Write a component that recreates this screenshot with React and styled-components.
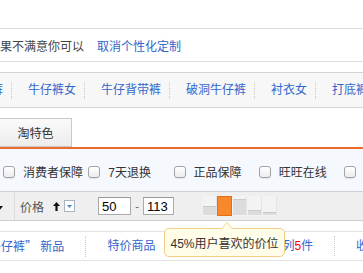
import React from 'react';
import styled, { createGlobalStyle } from 'styled-components';

const GlobalStyle = createGlobalStyle`
  html, body {
    margin: 0;
    padding: 0;
    background: #fff;
    overflow: hidden;
  }
  body {
    font-family: "Liberation Sans", "Noto Sans CJK SC", sans-serif;
    font-size: 12px;
    color: #333;
  }
`;

const Page = styled.div`
  width: 363px;
  height: 273px;
  overflow: hidden;
  position: relative;
`;

const TopSpace = styled.div`
  height: 28px;
  border-bottom: 1px solid #ddd;
`;

const Notice = styled.div`
  height: 32px;
  display: flex;
  align-items: center;
  border-bottom: 1px solid #ddd;
  color: #444;
  white-space: nowrap;
`;

const Link = styled.a`
  color: #3366cc;
  text-decoration: none;
  margin-left: ${p => p.$gap || 0}px;
`;

const Nav = styled.div`
  margin-top: 10px;
  height: 34px;
  background: #f7f7f7;
  border-top: 1px solid #d4d4d4;
  border-bottom: 1px solid #d4d4d4;
  display: flex;
  align-items: center;
  white-space: nowrap;
`;

const NavList = styled.div`
  display: flex;
  align-items: center;
  margin-left: -49px;
`;

const NavItem = styled.a`
  color: #3366cc;
  text-decoration: none;
  line-height: 17px;
  padding: 0 8px 0 16px;
  border-right: 1px dotted #c8c8c8;
  flex-shrink: 0;
`;

const TabRow = styled.div`
  margin-top: 10px;
  display: flex;
  border-bottom: 2px solid #ec6a2c;
`;

const TabButton = styled.div`
  margin-left: -1px;
  width: 71px;
  height: 27px;
  border: 1px solid #c9c9c9;
  background: linear-gradient(#fbfbfb, #ececec);
  display: flex;
  align-items: center;
  justify-content: center;
  color: #333;
`;

const Filters = styled.div`
  height: 43px;
  background: #f5f8fd;
  border-bottom: 1px solid #cfcfcf;
  display: flex;
  align-items: center;
  padding: 3px 0 0 3px;
  box-sizing: border-box;
  white-space: nowrap;
`;

const FilterItem = styled.label`
  width: 85.25px;
  flex-shrink: 0;
  display: flex;
  align-items: center;
  gap: 8px;
`;

const Check = styled.span`
  width: 10px;
  height: 10px;
  border: 1px solid #a3a3a3;
  border-radius: 3px;
  background: linear-gradient(#ffffff, #ececec);
  box-shadow: inset 0 1px 0 #fff, 0 1px 1px rgba(0, 0, 0, 0.08);
  flex-shrink: 0;
`;

const SortBar = styled.div`
  height: 28px;
  background: #efefef;
  border-bottom: 1px solid #cfcfcf;
  display: flex;
  align-items: center;
  white-space: nowrap;
`;

const Arrow = styled.svg`
  flex-shrink: 0;
  margin-left: ${p => p.$ml || 0}px;
`;

const Divider = styled.div`
  align-self: stretch;
  width: 1px;
  background: #dcdcdc;
  margin-left: 11px;
`;

const SortLabel = styled.span`
  margin-left: 5px;
  color: #555;
`;

const Drop = styled.span`
  margin-left: 4px;
  width: 9px;
  height: 10px;
  border: 1px solid #a9b4c2;
  background: #fff;
  display: flex;
  align-items: center;
  justify-content: center;
`;

const PriceInput = styled.input`
  box-sizing: border-box;
  width: ${p => p.$w}px;
  height: 18px;
  margin: 0 0 0 ${p => p.$ml || 0}px;
  padding: 0 3px;
  border: 1px solid #aaa;
  border-top-color: #999;
  background: #fff;
  font-family: "Liberation Sans", sans-serif;
  font-size: 13px;
  color: #000;
  outline: none;
`;

const Dash = styled.span`
  width: 12px;
  text-align: center;
  color: #666;
  font-size: 11px;
`;

const Histogram = styled.div`
  position: relative;
  margin-left: 28px;
  display: flex;
  height: 20px;
`;

const Column = styled.div`
  width: 15px;
  height: 20px;
  box-sizing: border-box;
  background: ${p => (p.$active ? '#f7892b' : '#f3f3f3')};
  border: 1px solid ${p => (p.$active ? '#ee6a10' : '#f3f3f3')};
  border-right-color: ${p => (p.$active ? '#ee6a10' : '#e4e4e4')};
  display: flex;
  align-items: flex-end;
`;

const Fill = styled.div`
  width: 100%;
  background: #dcdcdc;
  border-top: 1px solid #cacaca;
`;

const Tooltip = styled.div`
  position: absolute;
  z-index: 5;
  top: 32px;
  left: -38px;
  width: 121px;
  height: 29px;
  box-sizing: border-box;
  background: #fffce8;
  border: 1px solid #f6cd86;
  border-radius: 5px;
  display: flex;
  align-items: center;
  justify-content: center;
  color: #333;
  white-space: nowrap;
  &::before,
  &::after {
    content: '';
    position: absolute;
    left: 56px;
    width: 0;
    height: 0;
    border: 6px solid transparent;
    border-top: 0;
  }
  &::before {
    top: -7px;
    border-bottom: 7px solid #f6cd86;
  }
  &::after {
    top: -6px;
    border-bottom: 7px solid #fffce8;
  }
`;

const Links = styled.div`
  margin-top: 10px;
  height: 28px;
  border-top: 1px solid #e3e3e3;
  border-bottom: 1px solid #e3e3e3;
  display: flex;
  align-items: center;
  white-space: nowrap;
`;

const LinkItem = styled.a`
  color: #3366cc;
  text-decoration: none;
  line-height: 20px;
  padding: 0 21px;
  border-right: 1px dotted #c8c8c8;
  flex-shrink: 0;
  &:first-child {
    margin-left: -32px;
  }
`;

const Quote = styled.span`
  font-family: "Noto Sans CJK SC", sans-serif;
`;

const Red = styled.span`
  color: #f00;
`;

const navItems = ['牛仔裤', '牛仔裤女', '牛仔背带裤', '破洞牛仔裤', '衬衣女', '打底裤'];
const filters = ['消费者保障', '7天退换', '正品保障', '旺旺在线', '货到付款'];
const bars = [
  { h: 8 },
  { active: true },
  { h: 15 },
  { h: 4 },
  { h: 2 },
];

export default function App() {
  return (
    <Page>
      <GlobalStyle />
      <TopSpace />
      <Notice>
        <span>果不满意你可以</span>
        <Link href="#" $gap={13}>取消个性化定制</Link>
      </Notice>
      <Nav>
        <NavList>
          {navItems.map(n => (
            <NavItem href="#" key={n}>{n}</NavItem>
          ))}
        </NavList>
      </Nav>
      <TabRow>
        <TabButton>淘特色</TabButton>
      </TabRow>
      <Filters>
        {filters.map(f => (
          <FilterItem key={f}>
            <Check />
            <span>{f}</span>
          </FilterItem>
        ))}
      </Filters>
      <SortBar>
        <Arrow $ml={-5} width="8" height="10" viewBox="0 0 8 10">
          <path d="M3 0H5V5H8L4 10L0 5H3Z" fill="#111" />
        </Arrow>
        <Divider />
        <SortLabel>价格</SortLabel>
        <Arrow $ml={9} width="7" height="9" viewBox="0 0 7 9">
          <path d="M3.5 0L7 4H4.6V9H2.4V4H0Z" fill="#111" />
        </Arrow>
        <Drop>
          <svg width="5" height="3" viewBox="0 0 5 3">
            <path d="M0 0H5L2.5 3Z" fill="#4a86c8" />
          </svg>
        </Drop>
        <PriceInput $w={33} $ml={23} defaultValue="50" />
        <Dash>-</Dash>
        <PriceInput $w={31} defaultValue="113" />
        <Histogram>
          {bars.map((b, i) => (
            <Column key={i} $active={b.active}>
              {!b.active && <Fill style={{ height: b.h }} />}
            </Column>
          ))}
          <Tooltip>45%用户喜欢的价位</Tooltip>
        </Histogram>
      </SortBar>
      <Links>
        <LinkItem href="#">牛仔裤<Quote>”</Quote> 新品</LinkItem>
        <LinkItem href="#">特价商品</LinkItem>
        <LinkItem href="#">查看本店同款系列<Red>5</Red>件</LinkItem>
        <LinkItem href="#">收藏店铺</LinkItem>
      </Links>
    </Page>
  );
}
